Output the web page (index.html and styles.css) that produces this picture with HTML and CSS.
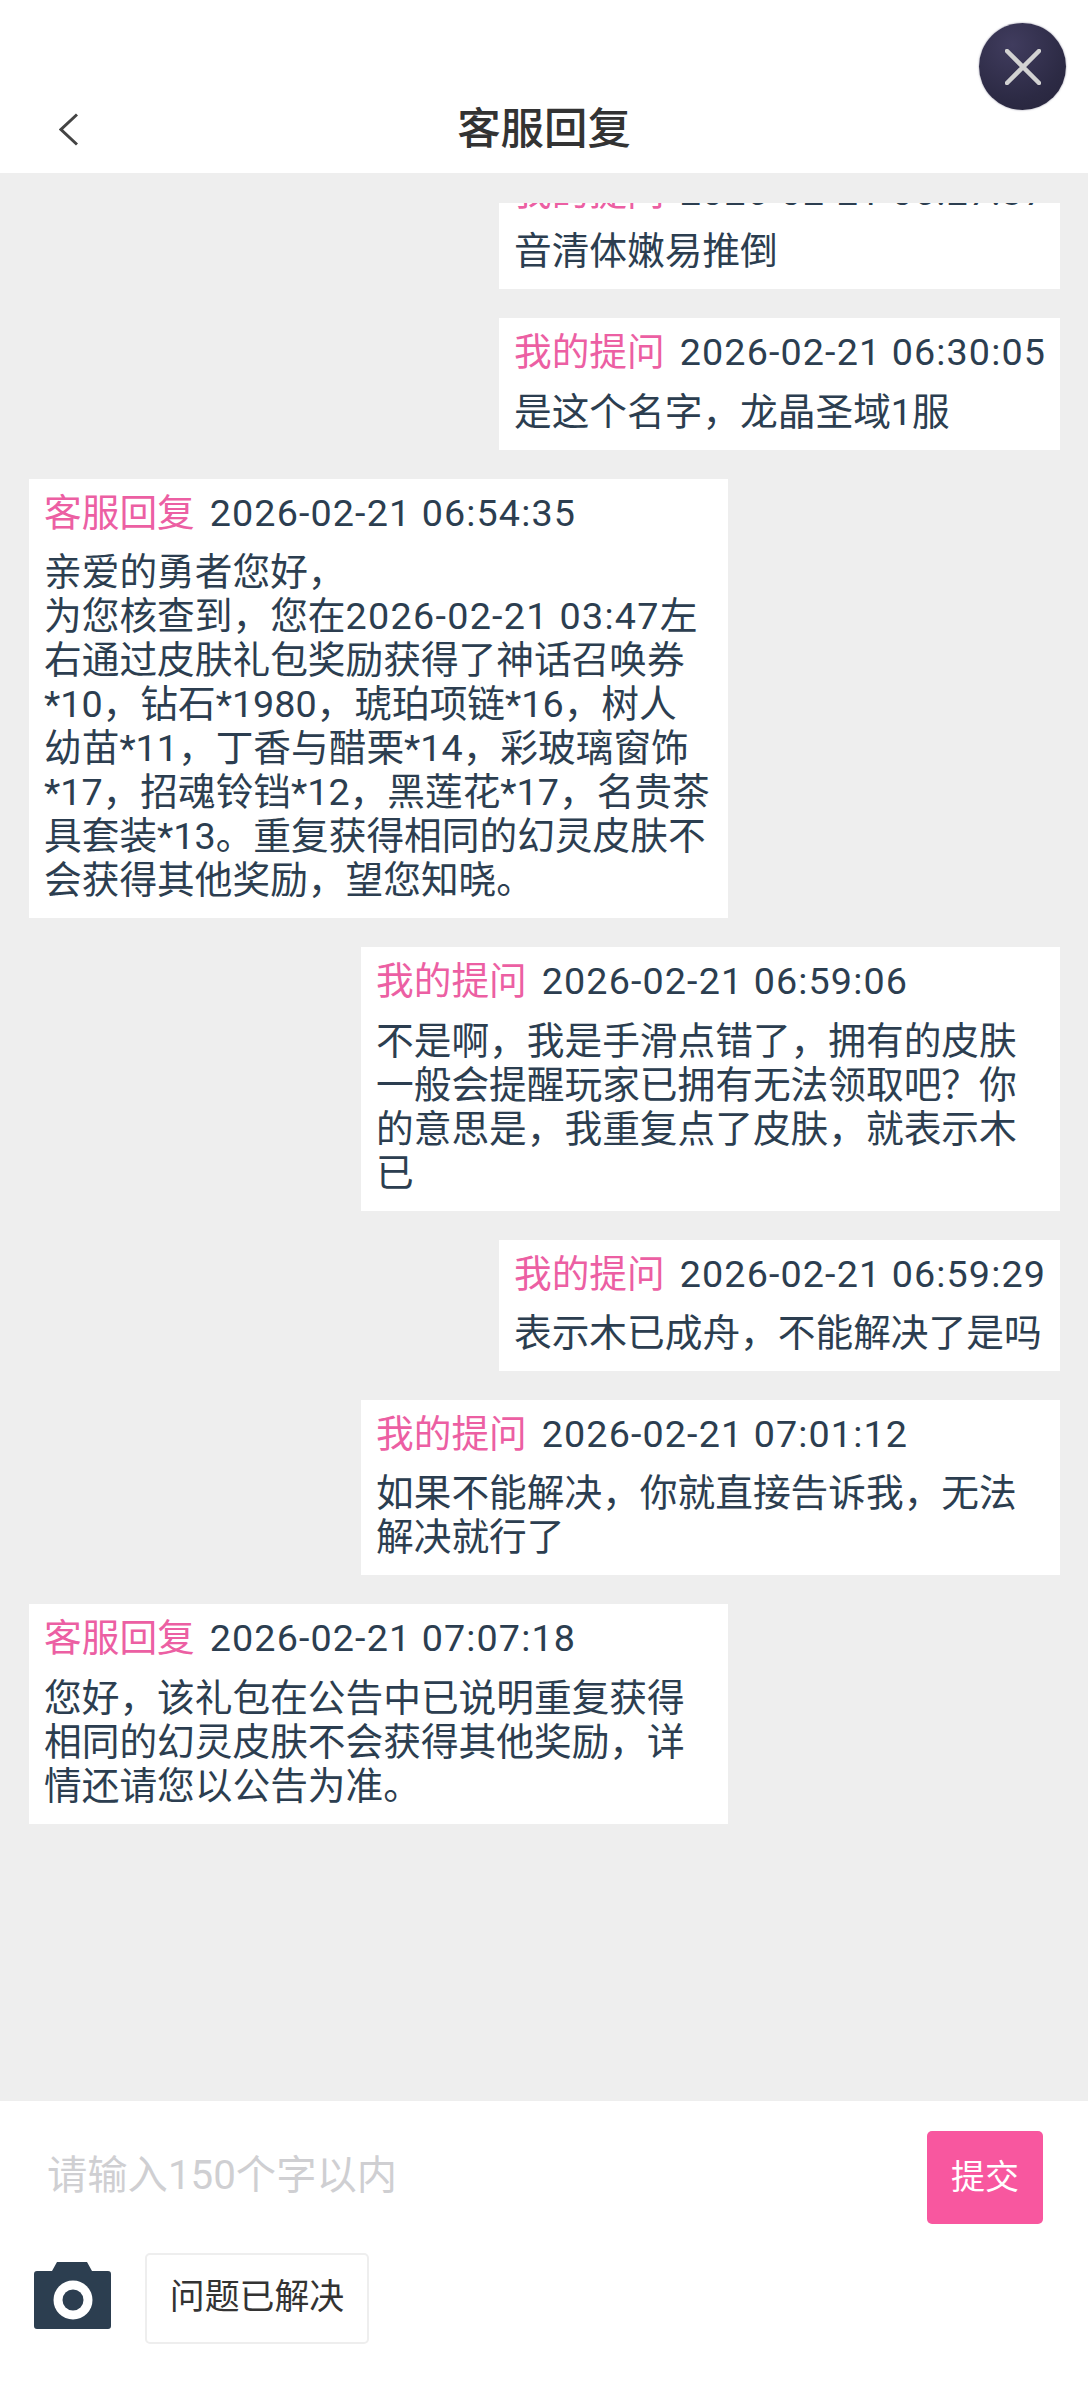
FILE: index.html
```html
<!DOCTYPE html>
<html lang="zh-CN">

<head>
    <meta charset="UTF-8">
    <title>客服回复</title>
    <link rel="stylesheet" href="styles.css">
</head>

<body>
    <div class="page">
        <div class="top-bar">
            <svg class="back-icon" width="19" height="33" viewBox="0 0 19 33">
                <path d="M18 1.5 L2 16.5 L18 31.5" fill="none" stroke="#444" stroke-width="3" />
            </svg>
            <h1 class="page-title">客服回复</h1>
        </div>
        <button class="close-button">
            <svg width="36" height="36" viewBox="0 0 36 36">
                <path d="M2 2 L34 34 M34 2 L2 34" fill="none" stroke="#d2d2d2" stroke-width="4.5" stroke-linecap="round" />
            </svg>
        </button>

        <div class="chat-area">
            <div class="chat-list">
                <div class="bubble mine scrolled">
                    <div class="bubble-head"><span class="who">我的提问</span><span class="when">2026-02-21 06:27:37</span></div>
                    <div class="bubble-text">音清体嫩易推倒</div>
                </div>
                <div class="bubble mine">
                    <div class="bubble-head"><span class="who">我的提问</span><span class="when">2026-02-21 06:30:05</span></div>
                    <div class="bubble-text">是这个名字，龙晶圣域1服</div>
                </div>
                <div class="bubble">
                    <div class="bubble-head"><span class="who">客服回复</span><span class="when">2026-02-21 06:54:35</span></div>
                    <div class="bubble-text">亲爱的勇者您好，<br>为您核查到，您在<span class="when-inline">2026-02-21 03:47</span>左右通过皮肤礼包奖励获得了神话召唤券*10，钻石*1980，琥珀项链*16，树人幼苗*11，丁香与醋栗*14，彩玻璃窗饰*17，招魂铃铛*12，黑莲花*17，名贵茶具套装*13。重复获得相同的幻灵皮肤不会获得其他奖励，望您知晓。</div>
                </div>
                <div class="bubble mine">
                    <div class="bubble-head"><span class="who">我的提问</span><span class="when">2026-02-21 06:59:06</span></div>
                    <div class="bubble-text">不是啊，我是手滑点错了，拥有的皮肤一般会提醒玩家已拥有无法领取吧？你的意思是，我重复点了皮肤，就表示木已</div>
                </div>
                <div class="bubble mine">
                    <div class="bubble-head"><span class="who">我的提问</span><span class="when">2026-02-21 06:59:29</span></div>
                    <div class="bubble-text">表示木已成舟，不能解决了是吗</div>
                </div>
                <div class="bubble mine">
                    <div class="bubble-head"><span class="who">我的提问</span><span class="when">2026-02-21 07:01:12</span></div>
                    <div class="bubble-text">如果不能解决，你就直接告诉我，无法解决就行了</div>
                </div>
                <div class="bubble">
                    <div class="bubble-head"><span class="who">客服回复</span><span class="when">2026-02-21 07:07:18</span></div>
                    <div class="bubble-text">您好，该礼包在公告中已说明重复获得相同的幻灵皮肤不会获得其他奖励，详情还请您以公告为准。</div>
                </div>
            </div>
        </div>

        <div class="footer">
            <div class="input-row">
                <input class="reply-input" type="text" placeholder="请输入150个字以内">
                <button class="submit-button">提交</button>
            </div>
            <div class="tool-row">
                <svg class="camera-icon" width="77" height="67" viewBox="0 0 77 67">
                    <path d="M23 0 H53 L58 9 H74 Q77 9 77 12 V64 Q77 67 74 67 H3 Q0 67 0 64 V12 Q0 9 3 9 H18 Z" fill="#2c3e50" />
                    <circle cx="39" cy="38" r="19.5" fill="#fff" />
                    <circle cx="39" cy="38" r="10.5" fill="#2c3e50" />
                </svg>
                <button class="solved-button">问题已解决</button>
            </div>
        </div>
    </div>
</body>

</html>
```

FILE: styles.css
```css
* {
    box-sizing: border-box;
}

body {
    margin: 0;
    font-family: Roboto, "Noto Sans CJK SC", sans-serif;
    background-color: #fff;
}

.page {
    position: relative;
    display: flex;
    flex-direction: column;
    height: 2400px;
    overflow: hidden;
}

.top-bar {
    display: flex;
    align-items: center;
    justify-content: center;
    position: relative;
    height: 173px;
    padding-top: 87px;
    background-color: #fff;
}

.back-icon {
    position: absolute;
    left: 59px;
    top: 113px;
}

.page-title {
    margin: 0;
    font-size: 43.4px;
    font-weight: 500;
    line-height: 50px;
    color: #333;
}

.close-button {
    position: absolute;
    left: 978px;
    top: 23px;
    width: 87px;
    height: 87px;
    display: flex;
    align-items: center;
    justify-content: center;
    margin-left: 1px;
    padding: 0;
    border: none;
    border-radius: 50%;
    background: radial-gradient(circle at 38% 25%, #403c5e, #2c2a44 65%, #26243a);
    box-shadow: 0 0 2px rgba(60, 56, 90, 0.6);
}

.chat-area {
    flex: 1;
    min-height: 0;
    display: flex;
    padding: 30px 28px 0 29px;
    background-color: #eee;
}

.chat-list {
    flex: 1;
    display: flex;
    flex-direction: column;
    align-items: flex-start;
    gap: 29px;
    overflow: hidden;
}

.bubble {
    max-width: 699px;
    padding: 12px 14px 16px 15px;
    background-color: #fff;
    font-size: 37.7px;
    line-height: 44px;
    color: #2c3e50;
}

.bubble.mine {
    align-self: flex-end;
}

/* list is scrolled a bit, first message is cut by the top */
.bubble.scrolled {
    margin-top: -45px;
}

.bubble-head {
    display: flex;
    gap: 15px;
    margin-bottom: 15.4px;
    white-space: nowrap;
}

.who {
    color: #ec5fa3;
}

.when {
    letter-spacing: 1.12px;
}

.when-inline {
    letter-spacing: 1.3px;
}

.footer {
    height: 299px;
    padding: 30px 45px 0 34px;
    background-color: #fff;
}

.input-row {
    display: flex;
    align-items: center;
    justify-content: space-between;
}

.reply-input {
    flex: 1;
    height: 60px;
    margin-left: 13px;
    margin-bottom: 4px;
    padding: 0;
    border: none;
    outline: none;
    font-family: inherit;
    font-size: 40.3px;
    color: #2c3e50;
}

.reply-input::placeholder {
    color: #cfcfd2;
    opacity: 1;
}

.submit-button {
    width: 116px;
    height: 93px;
    padding: 0 0 6px;
    border: none;
    border-radius: 5px;
    background-color: #f8579f;
    color: #fff;
    font-family: inherit;
    font-size: 34px;
}

.tool-row {
    display: flex;
    align-items: center;
    gap: 34px;
    margin-top: 29px;
}

.camera-icon {
    margin-bottom: 6px;
}

.solved-button {
    width: 224px;
    height: 91px;
    padding: 0 0 10px;
    border: 2px solid #eee;
    border-radius: 5px;
    background-color: #fff;
    color: #333;
    font-family: inherit;
    font-size: 34.9px;
}
```
